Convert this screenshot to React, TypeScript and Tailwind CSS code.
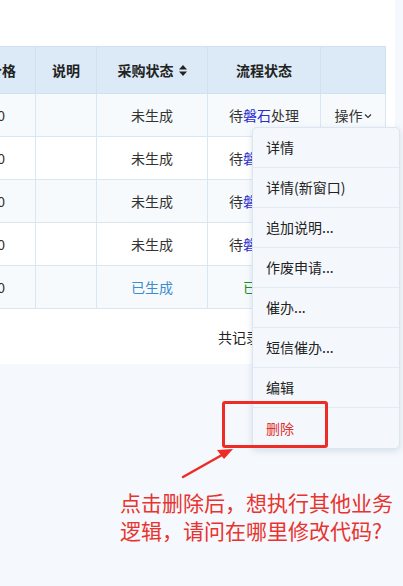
import React from "react";

const rows = [
  { price: "3000.00", buy: "未生成", flow: "pending", bg: "bg-[#f6fafd]" },
  { price: "3000.00", buy: "未生成", flow: "pending", bg: "bg-white" },
  { price: "3000.00", buy: "未生成", flow: "pending", bg: "bg-[#f6fafd]" },
  { price: "3000.00", buy: "未生成", flow: "pending", bg: "bg-white" },
  { price: "3000.00", buy: "已生成", flow: "done", bg: "bg-[#f6fafd]" },
];

const menu = ["详情", "详情(新窗口)", "追加说明...", "作废申请...", "催办...", "短信催办...", "编辑", "删除"];

const cell = "flex items-center justify-center border-r border-b border-[#d9e7f3] h-[43px] whitespace-nowrap";
const head = "flex items-center justify-center border-r border-b border-[#cfe0ef] h-[47px] font-bold text-[#222]";

function SortIcon() {
  return (
    <svg width="8" height="11" viewBox="0 0 8 11" className="ml-[5px]">
      <path d="M4 0 L8 4.5 H0 Z" fill="#222" />
      <path d="M0 6.5 H8 L4 11 Z" fill="#222" />
    </svg>
  );
}

export default function App() {
  return (
    <div
      className="relative w-[403px] h-[586px] overflow-hidden bg-[#f5f8fc] text-[14px] text-[#333]"
      style={{ fontFamily: '"Noto Sans CJK SC", "Noto Sans", sans-serif' }}
    >
      <div className="w-[395px] h-[364px] bg-white pt-[46px]">
        <div className="grid grid-cols-[36px_61px_111px_113px_65px] w-[386px] border-t border-[#cfe0ef]">
          <div className={`${head} bg-[#dbeaf6] overflow-hidden justify-end pr-[19px]`}>
            <span className="whitespace-nowrap">价格</span>
          </div>
          <div className={`${head} bg-[#dbeaf6]`}>说明</div>
          <div className={`${head} bg-[#dbeaf6]`}>
            采购状态
            <SortIcon />
          </div>
          <div className={`${head} bg-[#dbeaf6]`}>流程状态</div>
          <div className={`${head} bg-[#dbeaf6]`}></div>
          {rows.map((r, i) => (
            <React.Fragment key={i}>
              <div className={`${cell} ${r.bg} overflow-hidden justify-end pr-[30px]`}>{r.price}</div>
              <div className={`${cell} ${r.bg}`}></div>
              <div className={`${cell} ${r.bg} ${r.buy === "已生成" ? "text-[#3d8ccc]" : ""}`}>{r.buy}</div>
              <div className={`${cell} ${r.bg}`}>
                {r.flow === "pending" ? (
                  <span>
                    待<span className="text-[#2b2bd0]">磐石</span>处理
                  </span>
                ) : (
                  <span className="text-[#1c8a1c]">已完成</span>
                )}
              </div>
              <div className={`${cell} ${r.bg}`}>
                {i === 0 && (
                  <span className="flex items-center">
                    操作
                    <svg width="8" height="6" viewBox="0 0 8 6" className="ml-[1px] mt-[2px]">
                      <path d="M1 1.5 L4 4.5 L7 1.5" stroke="#333" strokeWidth="1.2" fill="none" />
                    </svg>
                  </span>
                )}
              </div>
            </React.Fragment>
          ))}
        </div>
        <div className="pl-[218px] pt-[18px] text-[#222] whitespace-nowrap">共记录 5 条</div>
      </div>

      {/* dropdown menu */}
      <div className="absolute left-[252px] top-[127px] w-[148px] rounded-[5px] border border-[#dbe6f0] bg-[#f4f8fc] shadow-[0_2px_6px_rgba(120,150,180,0.25)]">
        {menu.map((m, i) => (
          <div
            key={m}
            className={`h-[40px] flex items-center pl-[13px] ${i < menu.length - 1 ? "border-b border-[#e1ebf4]" : ""} ${
              m === "删除" ? "text-[#e0302c]" : "text-[#222]"
            }`}
          >
            {m}
          </div>
        ))}
      </div>

      {/* annotation box */}
      <div className="absolute left-[222px] top-[401px] w-[106px] h-[47px] border-[3px] border-[#ee2b25] rounded-[3px]" />

      <svg className="absolute left-0 top-0" width="403" height="586" viewBox="0 0 403 586">
        <path d="M183 477 L222 455" stroke="#ee2b25" strokeWidth="2.5" strokeLinecap="round" />
        <path d="M233 449 L217 450 L224 459 Z" fill="#ee2b25" />
      </svg>

      <div className="absolute left-[120px] top-[488px] w-[280px] text-[21px] leading-[28px] text-[#e8332e]">
        点击删除后，想执行其他业务逻辑，请问在哪里修改代码?
      </div>
    </div>
  );
}
